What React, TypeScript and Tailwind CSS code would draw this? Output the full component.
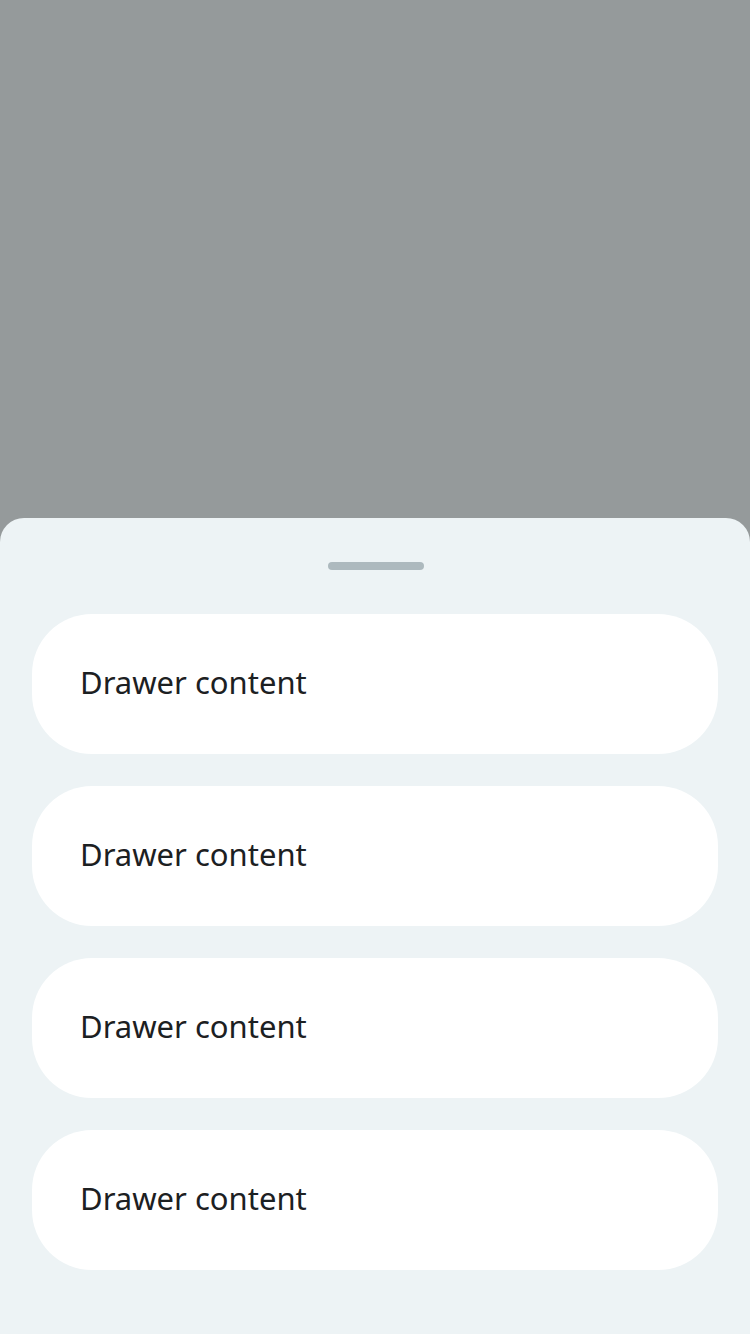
export default function App() {
  const items = [0, 1, 2, 3];
  return (
    <div className="w-[750px] h-[1334px] bg-[#959a9b] flex flex-col justify-end" style={{ fontFamily: '"Noto Sans", sans-serif' }}>
      <div className="bg-[#edf3f5] rounded-t-[24px] px-8 pb-16 pt-[44px] flex flex-col">
        <div className="ml-[296px] w-[96px] h-[8px] rounded-full bg-[#adb9be]" />
        <div className="mt-[44px] flex flex-col gap-8">
          {items.map((i) => (
            <div key={i} className="h-[140px] bg-white rounded-[60px] flex items-center pl-12 pb-[3px]">
              <span className="text-[31px] leading-none text-[#1c2022]">Drawer content</span>
            </div>
          ))}
        </div>
      </div>
    </div>
  );
}
